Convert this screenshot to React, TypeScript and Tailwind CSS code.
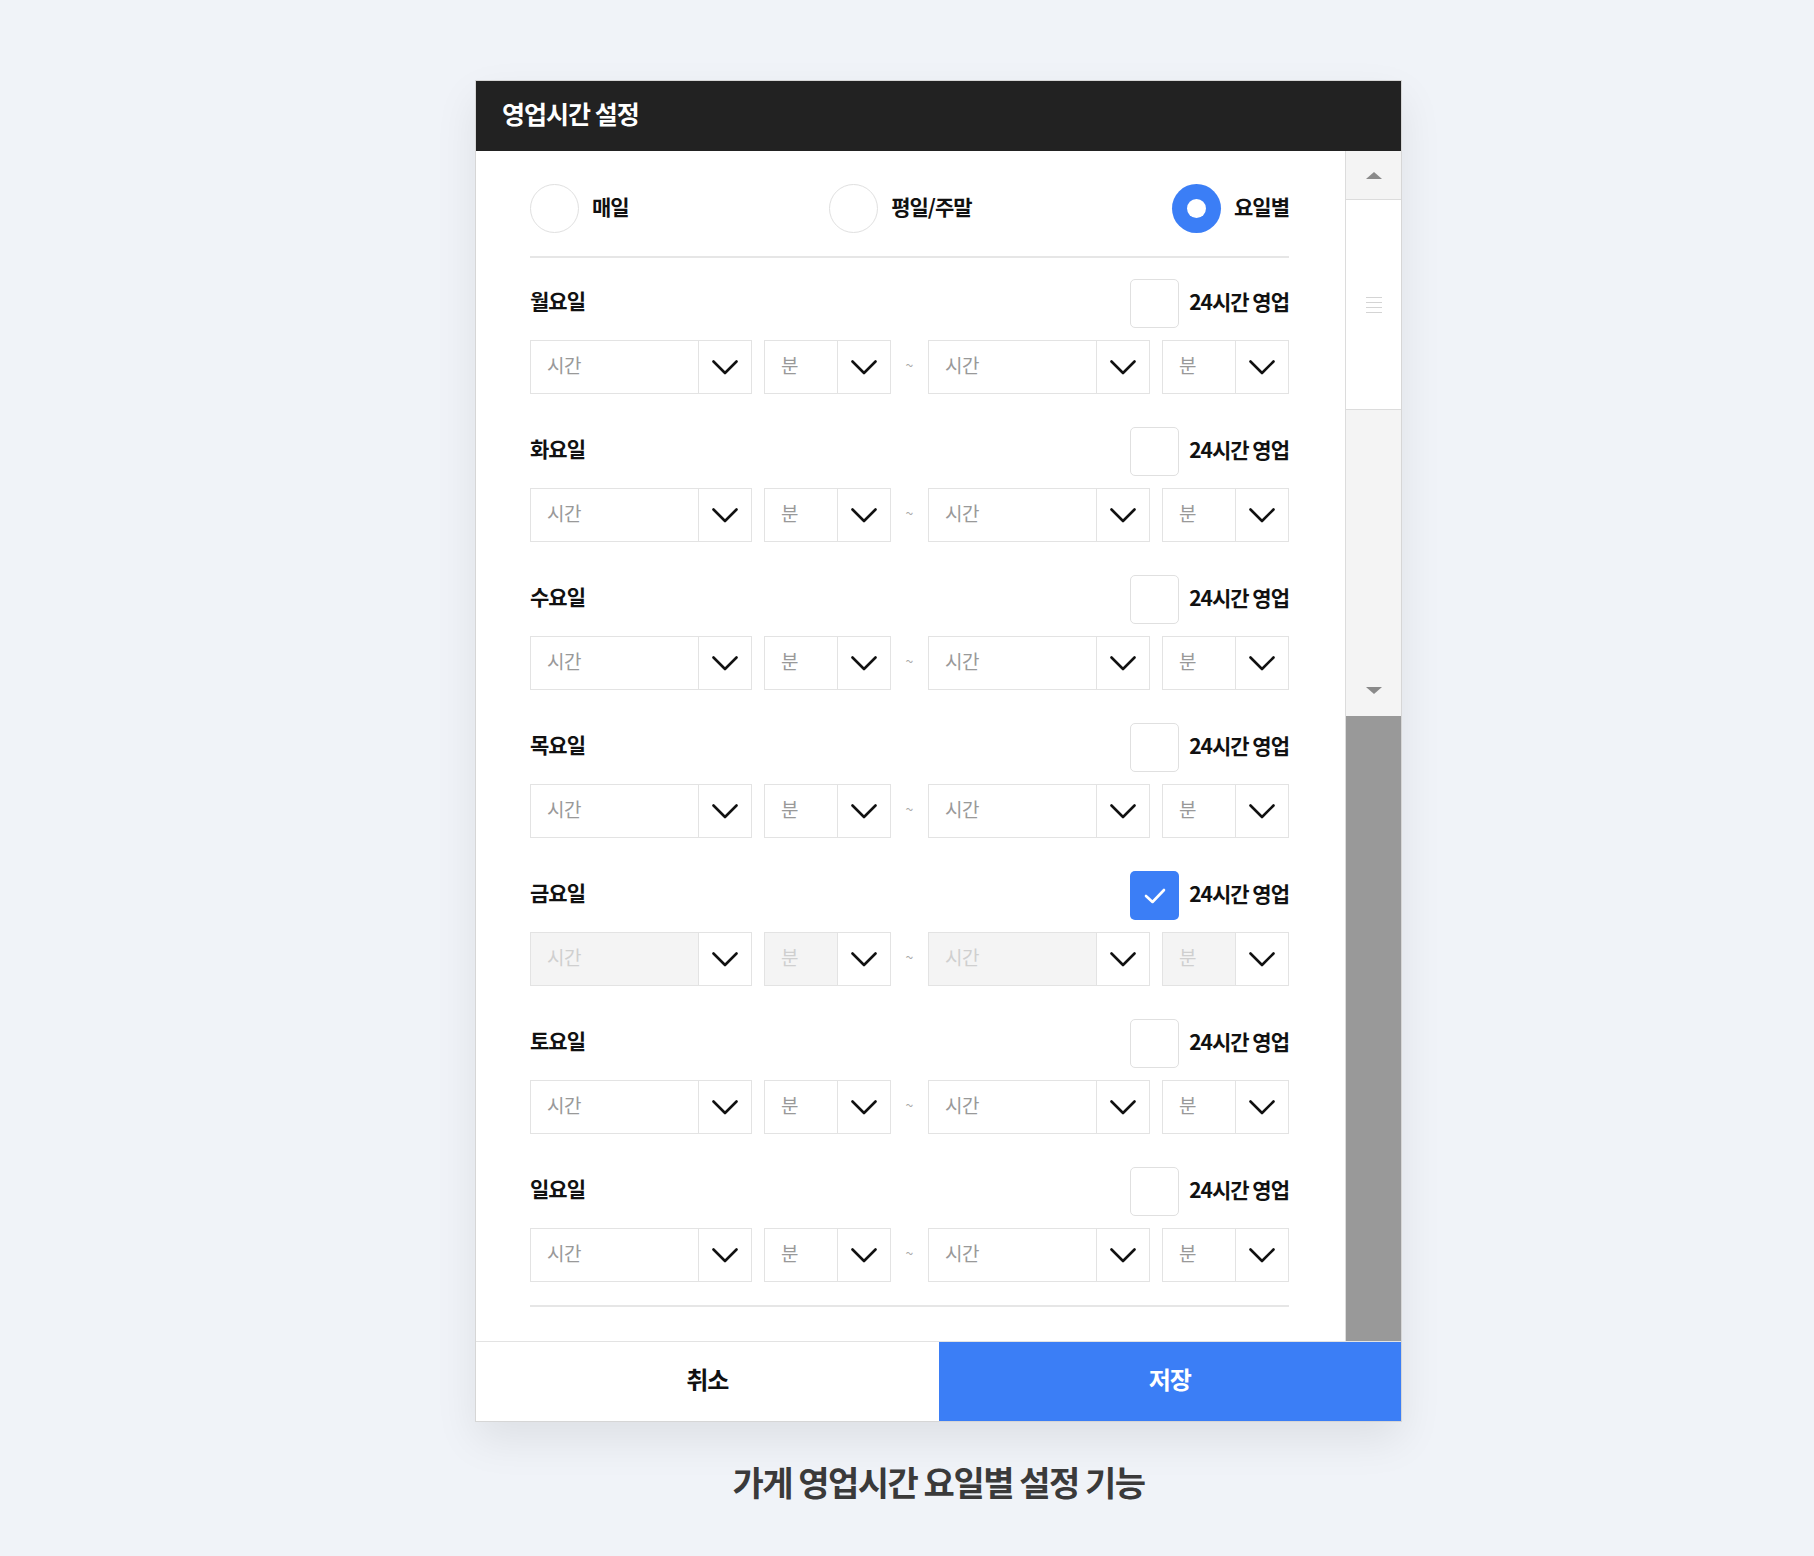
import React from 'react';

const DAYS = ['월요일', '화요일', '수요일', '목요일', '금요일', '토요일', '일요일'];
const FONT = { fontFamily: '"Noto Sans CJK KR", "Noto Sans", sans-serif' };

function Chevron() {
  return (
    <svg width="26" height="15" viewBox="0 0 26 15" fill="none">
      <path d="M1.5 1.5 L13 13 L24.5 1.5" stroke="#111" strokeWidth="2.6" strokeLinecap="round" strokeLinejoin="round" />
    </svg>
  );
}

function Select({ label, width, disabled }: { label: string; width: string; disabled: boolean }) {
  return (
    <div className={`flex h-[54px] border border-[#e3e3e3] ${width}`}>
      <div
        className={`flex flex-1 items-center pb-[4px] pl-[16px] text-[19px] tracking-[-0.5px] ${
          disabled ? 'bg-[#f4f4f4] text-[#cfcfcf]' : 'bg-white text-[#999999]'
        }`}
      >
        {label}
      </div>
      <div className="flex w-[53px] items-center justify-center border-l border-[#e3e3e3] bg-white">
        <Chevron />
      </div>
    </div>
  );
}

function Radio({ label, checked }: { label: string; checked?: boolean }) {
  return (
    <div className="flex items-center gap-[13px]">
      {checked ? (
        <div className="flex h-[49px] w-[49px] items-center justify-center rounded-full bg-[#3b7ef6]">
          <div className="h-[19px] w-[19px] rounded-full bg-white" />
        </div>
      ) : (
        <div className="h-[49px] w-[49px] rounded-full border border-[#e0e0e0] bg-white" />
      )}
      <span className="pb-[4px] text-[21px] font-bold tracking-[-1px] text-[#111]">{label}</span>
    </div>
  );
}

function DayRow({ day, allDay }: { day: string; allDay: boolean }) {
  return (
    <div className="flex flex-col gap-[12px]">
      <div className="flex items-center justify-between">
        <span className="pb-[5px] text-[21px] font-bold tracking-[-1px] text-[#111]">{day}</span>
        <div className="flex items-center gap-[10px]">
          {allDay ? (
            <div className="flex h-[49px] w-[49px] items-center justify-center rounded-[5px] bg-[#3b7ef6]">
              <svg width="24" height="18" viewBox="0 0 24 18" fill="none">
                <path d="M3 9 L9.5 15 L21 3" stroke="#fff" strokeWidth="2.6" strokeLinecap="round" strokeLinejoin="round" />
              </svg>
            </div>
          ) : (
            <div className="h-[49px] w-[49px] rounded-[5px] border border-[#e0e0e0] bg-white" />
          )}
          <span className="pb-[4px] text-[21px] font-bold tracking-[-1px] text-[#111]">24시간 영업</span>
        </div>
      </div>
      <div className="flex items-center">
        <Select label="시간" width="w-[222px]" disabled={allDay} />
        <div className="w-[12px]" />
        <Select label="분" width="w-[127px]" disabled={allDay} />
        <div className="flex w-[37px] justify-center pb-[4px] text-[14px] text-[#aaa]">~</div>
        <Select label="시간" width="w-[222px]" disabled={allDay} />
        <div className="w-[12px]" />
        <Select label="분" width="w-[127px]" disabled={allDay} />
      </div>
    </div>
  );
}

function Scrollbar() {
  return (
    <div className="flex w-[56px] flex-col border-l border-[#dcdcdc]">
      <div className="flex h-[49px] items-center justify-center border-b border-[#dcdcdc] bg-[#f4f4f4]">
        <div className="h-0 w-0 border-x-[8px] border-b-[7px] border-x-transparent border-b-[#8a8a8a]" />
      </div>
      <div className="flex h-[209px] flex-col items-center justify-center gap-[4px] bg-white">
        <div className="h-px w-[16px] bg-[#d4d4d4]" />
        <div className="h-px w-[16px] bg-[#d4d4d4]" />
        <div className="h-px w-[16px] bg-[#d4d4d4]" />
        <div className="h-px w-[16px] bg-[#d4d4d4]" />
      </div>
      <div className="flex h-[307px] flex-col items-center justify-end border-t border-[#dcdcdc] bg-[#f4f4f4] pb-[22px]">
        <div className="h-0 w-0 border-x-[8px] border-t-[7px] border-x-transparent border-t-[#8a8a8a]" />
      </div>
      <div className="flex-1 bg-[#999999]" />
    </div>
  );
}

export default function App() {
  return (
    <div className="min-h-screen bg-[#f0f3f8] pt-[80px] pb-[60px]" style={FONT}>
      <div className="ml-[475px] w-[927px]">
        <div className="border border-[#d6d6d6] bg-white shadow-[0_18px_40px_rgba(0,0,0,0.08)]">
          {/* 헤더 */}
          <div className="flex h-[70px] items-center bg-[#222222] pb-[4px] pl-[26px]">
            <span className="text-[25px] font-bold tracking-[-1px] text-white">영업시간 설정</span>
          </div>

          {/* 본문 */}
          <div className="flex h-[1190px]">
            <div className="flex-1 pl-[54px] pr-[56px] pt-[33px]">
              <div className="flex items-center justify-between">
                <Radio label="매일" />
                <Radio label="평일/주말" />
                <Radio label="요일별" checked />
              </div>
              <div className="mt-[23px] h-[2px] bg-[#e6e6e6]" />
              <div className="mt-[21px] flex flex-col gap-[33px]">
                {DAYS.map(day => (
                  <DayRow key={day} day={day} allDay={day === '금요일'} />
                ))}
              </div>
              <div className="mt-[23px] h-[2px] bg-[#e6e6e6]" />
            </div>
            <Scrollbar />
          </div>

          {/* 하단 버튼 */}
          <div className="flex h-[80px] border-t border-[#e3e3e3]">
            <button className="flex-1 bg-white pb-[5px] text-[24px] font-bold tracking-[-1px] text-[#111]">취소</button>
            <button className="flex-1 bg-[#3b7ef6] pb-[5px] text-[24px] font-bold tracking-[-1px] text-white">저장</button>
          </div>
        </div>

        <p className="mt-[34px] text-center text-[34px] font-bold tracking-[-1.5px] text-[#3a3a3a]">
          가게 영업시간 요일별 설정 기능
        </p>
      </div>
    </div>
  );
}
